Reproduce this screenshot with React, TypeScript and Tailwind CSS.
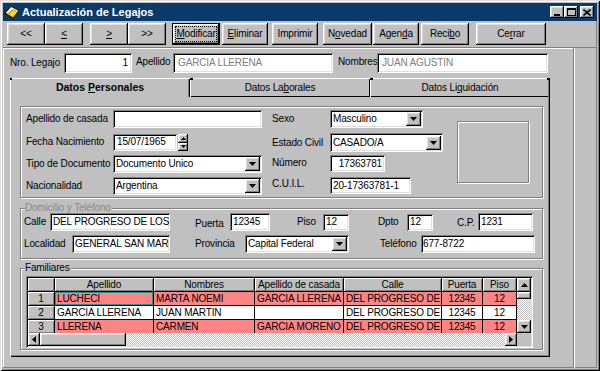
import React from "react";

const FONT = "font-['Liberation_Sans',Arial,sans-serif]";
const RAISED =
  "bg-[#c0c0c0] shadow-[inset_-1px_-1px_0_#000,inset_1px_1px_0_#fff,inset_-2px_-2px_0_#808080,inset_2px_2px_0_#dfdfdf]";
const SUNKEN =
  "bg-white shadow-[inset_1px_1px_0_#808080,inset_-1px_-1px_0_#fff,inset_2px_2px_0_#000,inset_-2px_-2px_0_#dfdfdf]";
const DITHER =
  "bg-[repeating-conic-gradient(#ffffff_0%_25%,#c0c0c0_0%_50%)] bg-[length:2px_2px]";

type Dir = "down" | "up" | "left" | "right";

function Tri({ dir = "down", s = 7 }: { dir?: Dir; s?: number }) {
  const h = Math.ceil(s / 2);
  if (dir === "down")
    return (
      <svg width={s} height={h} viewBox={`0 0 ${s} ${h}`}>
        <path d={`M0 0H${s}L${s / 2} ${h}Z`} fill="#000" />
      </svg>
    );
  if (dir === "up")
    return (
      <svg width={s} height={h} viewBox={`0 0 ${s} ${h}`}>
        <path d={`M0 ${h}H${s}L${s / 2} 0Z`} fill="#000" />
      </svg>
    );
  if (dir === "left")
    return (
      <svg width={h} height={s} viewBox={`0 0 ${h} ${s}`}>
        <path d={`M${h} 0V${s}L0 ${s / 2}Z`} fill="#000" />
      </svg>
    );
  return (
    <svg width={h} height={s} viewBox={`0 0 ${h} ${s}`}>
      <path d={`M0 0V${s}L${h} ${s / 2}Z`} fill="#000" />
    </svg>
  );
}

function FolderIcon() {
  return (
    <svg width="16" height="16" viewBox="0 0 16 16" className="shrink-0">
      <path d="M1 9 L7 2.5 L15 6.5 L9 14 Z" fill="#f4d838" stroke="#000" strokeWidth="0.9" />
      <path d="M3.5 8.5 L7.5 4 L12.5 6.6" fill="none" stroke="#fff" strokeWidth="1.2" />
      <path d="M5 10 L9 5.5 L12 7" fill="none" stroke="#8a7010" strokeWidth="0.8" />
      <path d="M1 9 L9 14 L9 15.2 L1 10.2 Z" fill="#7a6000" stroke="#000" strokeWidth="0.5" />
    </svg>
  );
}

function WinBtn({ kind }: { kind: "min" | "max" | "close" }) {
  return (
    <div className={`${RAISED} w-[14px] h-[12px] flex items-center justify-center`}>
      {kind === "min" && <div className="w-[6px] h-[2px] bg-black mt-[5px] -ml-[1px]" />}
      {kind === "max" && <div className="w-[9px] h-[8px] border border-black border-t-2" />}
      {kind === "close" && (
        <svg width="8" height="7" viewBox="0 0 8 7">
          <path d="M0.5 0.5L7.5 6.5M7.5 0.5L0.5 6.5" stroke="#000" strokeWidth="1.6" />
        </svg>
      )}
    </div>
  );
}

function Btn({ cls, children }: { cls: string; children: React.ReactNode }) {
  return (
    <div className={`${RAISED} h-[22px] shrink-0 flex items-center justify-center whitespace-nowrap ${cls}`}>
      {children}
    </div>
  );
}

function Field({ cls, value, txt = "" }: { cls: string; value: string; txt?: string }) {
  return (
    <div className={`${SUNKEN} shrink-0 flex items-center overflow-hidden whitespace-nowrap ${cls} ${txt}`}>
      {value}
    </div>
  );
}

function Combo({ cls, value }: { cls: string; value: string }) {
  return (
    <div className={`${SUNKEN} shrink-0 flex items-center pl-[3px] pr-[2px] ${cls}`}>
      <span className="flex-1 overflow-hidden whitespace-nowrap">{value}</span>
      <div className={`${RAISED} w-[15px] h-[14px] flex items-center justify-center shrink-0`}>
        <Tri dir="down" s={7} />
      </div>
    </div>
  );
}

function Label({ cls, children }: { cls: string; children: React.ReactNode }) {
  return <span className={`shrink-0 whitespace-nowrap ${cls}`}>{children}</span>;
}

const SALMON = "bg-[#ff8484]";

const rows = [
  { n: "1", hl: true, c: ["LUCHECI", "MARTA NOEMI", "GARCIA LLERENA", "DEL PROGRESO DE", "12345", "12"] },
  { n: "2", hl: false, c: ["GARCIA LLERENA", "JUAN MARTIN", "", "DEL PROGRESO DE", "12345", "12"] },
  { n: "3", hl: true, c: ["LLERENA", "CARMEN", "GARCIA MORENO", "DEL PROGRESO DE", "12345", "12"] },
];

const headers = ["", "Apellido", "Nombres", "Apellido de casada", "Calle", "Puerta", "Piso"];

function Grid() {
  return (
    <div className="ml-[5px] mt-[6px] w-[507px] h-[72px] p-[2px] bg-[#c0c0c0] shadow-[inset_1px_1px_0_#808080,inset_-1px_-1px_0_#fff,inset_2px_2px_0_#000,inset_-2px_-2px_0_#dfdfdf]">
      <div className="flex h-[55px]">
        <div className="w-[489px] h-full overflow-hidden bg-white">
          <div className="grid grid-cols-[27px_99px_101px_89px_98px_41px_34px] auto-rows-[14px]">
            {headers.map((h, i) => (
              <div
                key={"h" + i}
                className="bg-[#c0c0c0] border-r border-b border-black shadow-[inset_1px_1px_0_#fff,inset_-1px_-1px_0_#808080] flex items-center justify-center whitespace-nowrap overflow-hidden"
              >
                {h}
              </div>
            ))}
            {rows.map((r) => (
              <React.Fragment key={r.n}>
                <div className="bg-[#c0c0c0] border-r border-b border-black shadow-[inset_1px_1px_0_#fff,inset_-1px_-1px_0_#808080] flex items-center justify-center">
                  {r.n}
                </div>
                {r.c.map((v, j) => (
                  <div
                    key={j}
                    className={`border-r border-b border-black flex items-center whitespace-nowrap overflow-hidden ${
                      j >= 4 ? "justify-center" : "pl-[2px]"
                    } ${r.hl ? SALMON : "bg-white"} ${
                      r.n === "1" && j === 0 ? "shadow-[inset_0_0_0_1px_#2f8f8f]" : ""
                    }`}
                  >
                    {v}
                  </div>
                ))}
              </React.Fragment>
            ))}
          </div>
        </div>
        <div className="w-[14px] h-full flex flex-col">
          <div className={`${RAISED} h-[14px] flex items-center justify-center shrink-0`}>
            <Tri dir="up" s={7} />
          </div>
          <div className={`${RAISED} h-[7px] shrink-0`} />
          <div className={`flex-1 ${DITHER}`} />
          <div className={`${RAISED} h-[13px] flex items-center justify-center shrink-0`}>
            <Tri dir="down" s={7} />
          </div>
        </div>
      </div>
      <div className="flex h-[13px]">
        <div className="w-[489px] flex">
          <div className={`${RAISED} w-[12px] flex items-center justify-center shrink-0`}>
            <Tri dir="left" s={7} />
          </div>
          <div className={`${RAISED} w-[86px] shrink-0`} />
          <div className={`flex-1 ${DITHER}`} />
          <div className={`${RAISED} w-[12px] flex items-center justify-center shrink-0`}>
            <Tri dir="right" s={7} />
          </div>
        </div>
        <div className="flex-1 bg-[#c0c0c0]" />
      </div>
    </div>
  );
}

const GROUP = "border border-[#808080] shadow-[inset_1px_1px_0_#fff,1px_1px_0_#fff]";

export default function App() {
  return (
    <div
      className={`w-[600px] h-[371px] bg-[#c0c0c0] p-[3px] flex flex-col text-[10px] tracking-[-0.15px] leading-none text-black ${FONT} shadow-[inset_1px_1px_0_#dfdfdf,inset_-1px_-1px_0_#000,inset_2px_2px_0_#fff,inset_-2px_-2px_0_#808080]`}
    >
      {/* Title bar */}
      <div className="h-[18px] shrink-0 bg-[#0a3a6a] flex items-center pl-[1px] pr-[3px]">
        <FolderIcon />
        <span className="ml-[2px] text-white font-bold text-[11px] tracking-normal">Actualización de Legajos</span>
        <div className="ml-auto flex items-center">
          <WinBtn kind="min" />
          <WinBtn kind="max" />
          <div className="w-[2px]" />
          <WinBtn kind="close" />
        </div>
      </div>

      {/* Toolbar */}
      <div className="h-[27px] shrink-0 flex items-start pt-[2px] pl-[4px] shadow-[inset_0_-1px_0_#808080,inset_-1px_0_0_#808080]">
        <Btn cls="w-[38px]">&lt;&lt;</Btn>
        <Btn cls="w-[38px]">
          <span className="underline">&lt;</span>
        </Btn>
        <Btn cls="w-[38px] ml-[7px]">
          <span className="underline">&gt;</span>
        </Btn>
        <Btn cls="w-[38px]">&gt;&gt;</Btn>
        <div className="ml-[6px] w-[48px] h-[22px] border border-black shrink-0">
          <div className={`${RAISED} w-full h-full p-[2px]`}>
            <div className="w-full h-full border border-dotted border-black flex items-center justify-center">
              <span className="underline">M</span>odificar
            </div>
          </div>
        </div>
        <Btn cls="w-[46px] ml-[2px]">
          <span className="underline">E</span>liminar
        </Btn>
        <Btn cls="w-[46px] ml-[4px]">Imprimir</Btn>
        <Btn cls="w-[49px] ml-[5px]">
          N<span className="underline">o</span>vedad
        </Btn>
        <Btn cls="w-[46px] ml-[1px]">
          Agen<span className="underline">d</span>a
        </Btn>
        <Btn cls="w-[48px] ml-[2px]">
          Reci<span className="underline">b</span>o
        </Btn>
        <Btn cls="w-[70px] ml-[7px]">
          Ce<span className="underline">r</span>rar
        </Btn>
      </div>

      {/* Body */}
      <div className="flex flex-1">
        <div className="w-[571px] h-full pl-[7px] pt-[5px] flex flex-col shadow-[inset_-1px_-1px_0_#808080,inset_1px_1px_0_#fff]">
          {/* Top row */}
          <div className="flex items-center h-[20px]">
            <Label cls="w-[54px]">Nro. Legajo</Label>
            <Field cls="w-[68px] h-full justify-end pr-[4px]" value="1" />
            <Label cls="w-[37px] ml-[4px] -mt-[3px]">Apellido</Label>
            <Field cls="w-[160px] h-full pl-[5px]" txt="text-[#808080]" value="GARCIA LLERENA" />
            <Label cls="w-[39px] ml-[5px] -mt-[3px]">Nombres</Label>
            <Field cls="w-[171px] h-full pl-[5px]" txt="text-[#808080]" value="JUAN AGUSTIN" />
          </div>

          {/* Tabs */}
          <div className="flex mt-[5px] h-[19px]">
            <div className="relative w-[180px] h-full flex items-center justify-center font-bold text-[10.5px] tracking-normal shadow-[inset_1px_1px_0_#fff,inset_-1px_0_0_#000,inset_-2px_0_0_#808080]">
              <span>
                Datos <span className="underline">P</span>ersonales
              </span>
              <div className="absolute left-0 top-0 w-[2px] h-[2px] bg-black" />
            </div>
            <div className="relative w-[180px] h-full flex items-center justify-center shadow-[inset_1px_1px_0_#fff,inset_-1px_0_0_#000,inset_0_-1px_0_#000]">
              <span>
                Datos La<span className="underline">b</span>orales
              </span>
              <div className="absolute left-0 top-0 w-[3px] h-[2px] bg-black" />
            </div>
            <div className="relative w-[180px] h-full flex items-center justify-center shadow-[inset_1px_1px_0_#fff,inset_-1px_0_0_#000,inset_-2px_0_0_#808080,inset_0_-1px_0_#000]">
              <span>
                Datos Li<span className="underline">q</span>uidación
              </span>
              <div className="absolute left-0 top-0 w-[3px] h-[2px] bg-black" />
              <div className="absolute right-0 top-0 w-[3px] h-[2px] bg-black" />
            </div>
          </div>

          {/* Tab page */}
          <div className="w-[540px] h-[260px] flex flex-col shadow-[inset_1px_0_0_#fff,inset_-1px_-1px_0_#000,inset_-2px_-2px_0_#808080]">
            {/* Group 1 */}
            <div className={`ml-[10px] mt-[9px] w-[523px] h-[92px] ${GROUP} flex pl-[5px] pt-[3px]`}>
              <div className="w-[236px] flex flex-col shrink-0">
                <div className="flex items-center h-[18px]">
                  <Label cls="w-[87px]">Apellido de casada</Label>
                  <Field cls="w-[149px] h-full" value="" />
                </div>
                <div className="flex items-center h-[18px] mt-[5px]">
                  <Label cls="w-[87px]">Fecha Nacimiento</Label>
                  <Field cls="w-[64px] h-[17px] pl-[4px]" value="15/07/1965" />
                  <div className="ml-[1px] w-[10px] h-[17px] flex flex-col">
                    <div className={`${RAISED} h-[9px] flex items-center justify-center`}>
                      <Tri dir="up" s={5} />
                    </div>
                    <div className={`${RAISED} h-[8px] flex items-center justify-center`}>
                      <Tri dir="down" s={5} />
                    </div>
                  </div>
                </div>
                <div className="flex items-center h-[18px] mt-[4px]">
                  <Label cls="w-[87px]">Tipo de Documento</Label>
                  <Combo cls="w-[149px] h-full" value="Documento Unico" />
                </div>
                <div className="flex items-center h-[18px] mt-[4px]">
                  <Label cls="w-[87px]">Nacionalidad</Label>
                  <Combo cls="w-[149px] h-full" value="Argentina" />
                </div>
              </div>
              <div className="ml-[10px] w-[171px] flex flex-col shrink-0">
                <div className="flex items-center h-[18px]">
                  <Label cls="w-[58px]">Sexo</Label>
                  <Combo cls="w-[93px] h-full" value="Masculino" />
                </div>
                <div className="flex items-center h-[19px] mt-[5px]">
                  <Label cls="w-[58px]">Estado Civil</Label>
                  <Combo cls="w-[113px] h-full" value="CASADO/A" />
                </div>
                <div className="flex items-center h-[17px] mt-[3px]">
                  <Label cls="w-[58px] -mt-[2px]">Número</Label>
                  <Field cls="w-[55px] h-full justify-end pr-[3px]" value="17363781" />
                </div>
                <div className="flex items-center h-[17px] mt-[5px]">
                  <Label cls="w-[58px] -mt-[3px]">C.U.I.L.</Label>
                  <Field cls="w-[81px] h-full pl-[3px]" value="20-17363781-1" />
                </div>
              </div>
              <div className="ml-[14px] mt-[11px] w-[72px] h-[62px] shrink-0 border border-[#808080] shadow-[1px_1px_0_#fff,inset_1px_1px_0_#fff]" />
            </div>

            {/* Group 2 */}
            <div className={`relative ml-[10px] mt-[10px] w-[523px] h-[51px] ${GROUP} pl-[3px] pt-[4px] flex flex-col`}>
              <span className="absolute -top-[6px] left-[4px] bg-[#c0c0c0] pr-[1px] text-[#8a8a8a]">
                Domicilio y Teléfono
              </span>
              <div className="flex items-center h-[18px]">
                <Label cls="w-[26px]">Calle</Label>
                <Field cls="w-[120px] h-full pl-[3px]" value="DEL PROGRESO DE LOS" />
                <Label cls="w-[35px] ml-[25px] mt-[4px]">Puerta</Label>
                <Field cls="w-[40px] h-full pl-[3px]" value="12345" />
                <Label cls="w-[26px] ml-[27px]">Piso</Label>
                <Field cls="w-[26px] h-[17px] pl-[3px]" value="12" />
                <Label cls="w-[29px] ml-[29px]">Dpto</Label>
                <Field cls="w-[26px] h-[17px] pl-[3px]" value="12" />
                <Label cls="w-[21px] ml-[24px] mt-[2px]">C.P.</Label>
                <Field cls="w-[55px] h-full pl-[3px]" value="1231" />
              </div>
              <div className="flex items-center h-[18px] mt-[4px]">
                <Label cls="w-[48px]">Localidad</Label>
                <Field cls="w-[98px] h-full pl-[3px]" value="GENERAL SAN MAR" />
                <Label cls="w-[50px] ml-[25px]">Provincia</Label>
                <Combo cls="w-[104px] h-full" value="Capital Federal" />
                <Label cls="w-[41px] ml-[31px]">Teléfono</Label>
                <Field cls="w-[114px] h-full pl-[2px]" value="677-8722" />
              </div>
            </div>

            {/* Group 3 */}
            <div className={`relative ml-[10px] mt-[9px] w-[523px] h-[82px] ${GROUP} flex flex-col`}>
              <span className="absolute -top-[6px] left-[4px] bg-[#c0c0c0] pr-[1px]">Familiares</span>
              <div className="h-[1px]" />
              <Grid />
            </div>
          </div>
        </div>
        <div className="flex-1 shadow-[inset_1px_0_0_#fff,inset_-1px_-1px_0_#808080]" />
      </div>
    </div>
  );
}
